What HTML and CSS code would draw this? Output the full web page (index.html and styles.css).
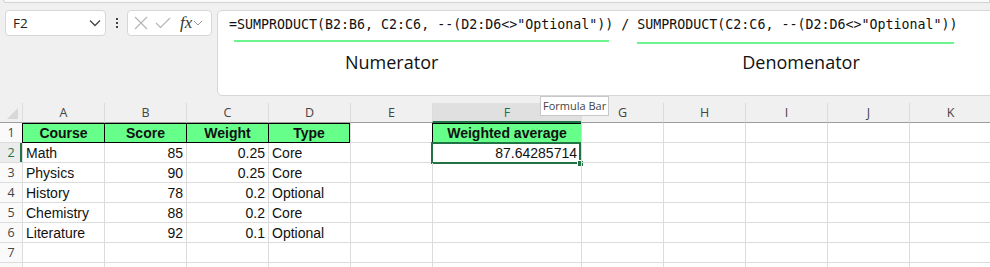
FILE: index.html
```html
<!DOCTYPE html>
<html>
    <head>
        <title>Weighted average</title>
        <link rel="stylesheet" href="styles.css">
    </head>
    <body>
        <div class="ribbon"></div>
        <div class="toolbar">
            <div class="namebox">
                <span>F2</span>
                <svg width="12" height="8" viewBox="0 0 12 8"><path d="M1 1.5 L6 6.5 L11 1.5" fill="none" stroke="#444" stroke-width="1.3"/></svg>
            </div>
            <div class="dots"><i></i><i></i><i></i></div>
            <div class="fnbox">
                <svg width="14" height="14" viewBox="0 0 14 14"><path d="M1 1 L13 13 M13 1 L1 13" stroke="#b4b4b4" stroke-width="1.1"/></svg>
                <svg width="16" height="12" viewBox="0 0 16 12"><path d="M1 6 L5.5 10.5 L15 1" fill="none" stroke="#b4b4b4" stroke-width="1.1"/></svg>
                <span class="fx">fx</span>
                <svg width="10" height="6" viewBox="0 0 10 6"><path d="M1 1 L5 5 L9 1" fill="none" stroke="#999" stroke-width="1"/></svg>
            </div>
            <div class="formula">
                <div class="part">
                    <code>=SUMPRODUCT(B2:B6, C2:C6, --(D2:D6&lt;&gt;"Optional"))</code>
                    <div class="bar num"></div>
                    <div class="label num">Numerator</div>
                </div>
                <code class="sep">&nbsp;/&nbsp;</code>
                <div class="part">
                    <code>SUMPRODUCT(C2:C6, --(D2:D6&lt;&gt;"Optional"))</code>
                    <div class="bar den"></div>
                    <div class="label den">Denomenator</div>
                </div>
            </div>
        </div>
        <div class="tooltip">Formula Bar</div>

        <div class="sheet">
            <div class="corner"><span></span></div>
            <div class="col">A</div><div class="col">B</div><div class="col">C</div><div class="col">D</div>
            <div class="col">E</div><div class="col active">F</div><div class="col">G</div><div class="col">H</div>
            <div class="col">I</div><div class="col">J</div><div class="col">K</div>

            <div class="row">1</div>
            <div class="cell head">Course</div><div class="cell head">Score</div><div class="cell head">Weight</div><div class="cell head">Type</div>
            <div class="cell"></div><div class="cell head">Weighted average</div>
            <div class="cell"></div><div class="cell"></div><div class="cell"></div><div class="cell"></div><div class="cell"></div>

            <div class="row active">2</div>
            <div class="cell">Math</div><div class="cell num">85</div><div class="cell num">0.25</div><div class="cell">Core</div>
            <div class="cell"></div><div class="cell num selected">87.64285714<span class="handle"></span></div>
            <div class="cell"></div><div class="cell"></div><div class="cell"></div><div class="cell"></div><div class="cell"></div>

            <div class="row">3</div>
            <div class="cell">Physics</div><div class="cell num">90</div><div class="cell num">0.25</div><div class="cell">Core</div>
            <div class="cell"></div><div class="cell"></div>
            <div class="cell"></div><div class="cell"></div><div class="cell"></div><div class="cell"></div><div class="cell"></div>

            <div class="row">4</div>
            <div class="cell">History</div><div class="cell num">78</div><div class="cell num">0.2</div><div class="cell">Optional</div>
            <div class="cell"></div><div class="cell"></div>
            <div class="cell"></div><div class="cell"></div><div class="cell"></div><div class="cell"></div><div class="cell"></div>

            <div class="row">5</div>
            <div class="cell">Chemistry</div><div class="cell num">88</div><div class="cell num">0.2</div><div class="cell">Core</div>
            <div class="cell"></div><div class="cell"></div>
            <div class="cell"></div><div class="cell"></div><div class="cell"></div><div class="cell"></div><div class="cell"></div>

            <div class="row">6</div>
            <div class="cell">Literature</div><div class="cell num">92</div><div class="cell num">0.1</div><div class="cell">Optional</div>
            <div class="cell"></div><div class="cell"></div>
            <div class="cell"></div><div class="cell"></div><div class="cell"></div><div class="cell"></div><div class="cell"></div>

            <div class="row">7</div>
            <div class="cell"></div><div class="cell"></div><div class="cell"></div><div class="cell"></div>
            <div class="cell"></div><div class="cell"></div>
            <div class="cell"></div><div class="cell"></div><div class="cell"></div><div class="cell"></div><div class="cell"></div>

            <div class="row"></div>
            <div class="cell"></div><div class="cell"></div><div class="cell"></div><div class="cell"></div>
            <div class="cell"></div><div class="cell"></div>
            <div class="cell"></div><div class="cell"></div><div class="cell"></div><div class="cell"></div><div class="cell"></div>
        </div>
    </body>
</html>
```

FILE: styles.css
```css
body {
    margin: 0;
    padding: 0;
    width: 990px;
    height: 267px;
    overflow: hidden;
    background: #f0f0f0;
    font-family: "Open Sans", "Noto Sans", sans-serif;
    position: relative;
}
.ribbon {
    height: 2px;
    margin-left: 3px;
    background: #fafafa;
    border: 1px solid #d2d2d2;
    border-top: none;
    border-bottom-left-radius: 5px;
}
.toolbar {
    display: flex;
    align-items: flex-start;
    padding: 7px 0 0 5px;
    height: 86px;
}
.namebox {
    box-sizing: border-box;
    width: 101px;
    height: 26px;
    display: flex;
    align-items: center;
    justify-content: space-between;
    padding: 0 4px 0 7px;
    background: #fff;
    border: 1px solid #d6d6d6;
    border-radius: 4px;
    font-size: 13.5px;
    color: #222;
}
.dots {
    width: 21px;
    height: 26px;
    display: flex;
    flex-direction: column;
    align-items: center;
    justify-content: center;
    gap: 2px;
}
.dots i {
    width: 2px;
    height: 2px;
    background: #444;
}
.fnbox {
    box-sizing: border-box;
    width: 85px;
    height: 26px;
    display: flex;
    align-items: center;
    gap: 7px;
    padding-left: 6px;
    background: #fff;
    border: 1px solid #d6d6d6;
    border-radius: 4px;
}
.fnbox .fx {
    font-family: "Liberation Serif", serif;
    font-style: italic;
    font-size: 17px;
    color: #333;
    margin-left: 2px;
    margin-right: -6px;
}
.formula {
    box-sizing: border-box;
    flex: 1;
    height: 86px;
    margin-left: 5px;
    margin-right: -6px;
    display: flex;
    align-items: flex-start;
    padding: 5px 0 0 11px;
    background: #fff;
    border: 1px solid #d6d6d6;
    border-radius: 5px;
}
code {
    font-family: "DejaVu Sans Mono", monospace;
    font-size: 13.3px;
    line-height: 18px;
    color: #111;
    white-space: pre;
}
.part {
    display: flex;
    flex-direction: column;
}
.bar {
    height: 2px;
    background: #6cf58d;
}
.bar.num {
    margin: 6px 4px 0 5px;
}
.bar.den {
    margin: 8px 4px 0 0;
}
.label {
    font-size: 18px;
    color: #111;
    line-height: 22px;
}
.label.num {
    margin: 9px 0 0 116px;
}
.label.den {
    margin: 7px 0 0 105px;
}
.tooltip {
    position: absolute;
    left: 540px;
    top: 96px;
    height: 18px;
    padding: 0 2px;
    background: #fff;
    border: 1px solid #c8c8c8;
    font-size: 11px;
    line-height: 18px;
    color: #444;
}
.sheet {
    display: grid;
    grid-template-columns: 22px repeat(5, 82px) 149px repeat(5, 82px);
    grid-auto-rows: 20px;
    margin-top: 7px;
    background: #fff;
    font-family: "Liberation Sans", Arial, sans-serif;
    font-size: 14px;
    color: #111;
}
.corner, .col {
    box-sizing: border-box;
    height: 20px;
    background: #f0f0f0;
    border-bottom: 1px solid #9c9c9c;
}
.corner span {
    display: block;
    margin: 5px 0 0 7px;
    width: 0;
    height: 0;
    border-left: 11px solid transparent;
    border-bottom: 11px solid #d8d8d8;
}
.col {
    display: flex;
    justify-content: center;
    align-items: center;
    border-left: 1px solid #dcdcdc;
    font-family: "Open Sans", "Noto Sans", sans-serif;
    font-size: 12.5px;
    color: #444;
}
.col.active {
    background: #e0e0e0;
    border-bottom: 2px solid #217346;
    color: #217346;
}
.row {
    box-sizing: border-box;
    display: flex;
    justify-content: center;
    align-items: center;
    font-family: "Open Sans", "Noto Sans", sans-serif;
    font-size: 12.5px;
    color: #444;
    border-bottom: 1px solid #dcdcdc;
    background: #fafafa;
}
.row.active {
    color: #217346;
    box-shadow: inset -2px 0 0 #217346;
    background: #ececec;
}
.cell {
    box-sizing: border-box;
    display: flex;
    align-items: center;
    padding: 0 3px;
    border-left: 1px solid #dcdcdc;
    border-bottom: 1px solid #dcdcdc;
    white-space: nowrap;
    position: relative;
}
.cell.num {
    justify-content: flex-end;
}
.cell.head {
    justify-content: center;
    font-weight: bold;
    background: #66ff8a;
    border: 1px solid #000;
    border-right: none;
}
.cell.head + .cell.head + .cell.head + .cell.head {
    border-right: 1px solid #000;
}
.cell.head:nth-child(18) {
    border-right: 1px solid #000;
}
.cell.selected {
    border: 2px solid #217346;
    margin: -1px 0 -1px -1px;
    padding-right: 2px;
}
.handle {
    position: absolute;
    right: -5px;
    bottom: -5px;
    width: 5px;
    height: 5px;
    background: #217346;
    border: 1px solid #fff;
}
```
